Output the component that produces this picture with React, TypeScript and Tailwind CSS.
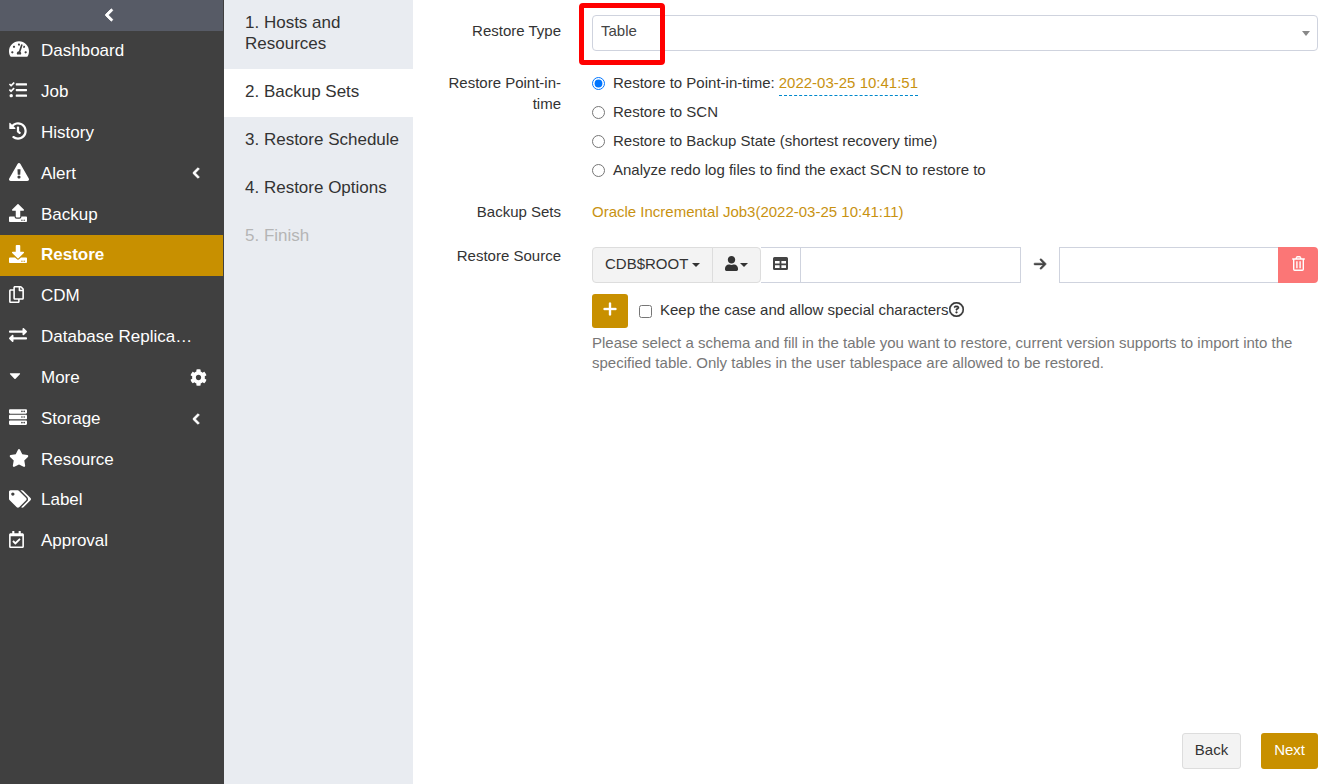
import { useState } from "react";
import type { ReactNode } from "react";
import type { IconType } from "react-icons";
import {
  FaChevronLeft,
  FaCaretDown,
  FaCog,
  FaDownload,
  FaExchangeAlt,
  FaExclamationTriangle,
  FaHistory,
  FaRegCalendarCheck,
  FaRegCopy,
  FaServer,
  FaStar,
  FaTachometerAlt,
  FaTags,
  FaTasks,
  FaUpload,
  FaUser,
} from "react-icons/fa";
import { FaArrowRight, FaPlus, FaRegCircleQuestion } from "react-icons/fa6";

type NavItem = {
  label: string;
  icon: IconType;
  size?: string;
  active?: boolean;
  trailing?: "chevron" | "gear";
};

const NAV: NavItem[] = [
  { label: "Dashboard", icon: FaTachometerAlt, size: "size-5" },
  { label: "Job", icon: FaTasks },
  { label: "History", icon: FaHistory },
  { label: "Alert", icon: FaExclamationTriangle, size: "size-5", trailing: "chevron" },
  { label: "Backup", icon: FaUpload },
  { label: "Restore", icon: FaDownload, active: true },
  { label: "CDM", icon: FaRegCopy, size: "h-[17px] w-[15px]" },
  { label: "Database Replica…", icon: FaExchangeAlt },
  { label: "More", icon: FaCaretDown, trailing: "gear" },
  { label: "Storage", icon: FaServer, trailing: "chevron" },
  { label: "Resource", icon: FaStar, size: "size-5" },
  { label: "Label", icon: FaTags, size: "size-[22px]" },
  { label: "Approval", icon: FaRegCalendarCheck, size: "h-[17px] w-[15px]" },
];

const STEPS = [
  "1. Hosts and Resources",
  "2. Backup Sets",
  "3. Restore Schedule",
  "4. Restore Options",
  "5. Finish",
];

const POINTS = [
  "Restore to Point-in-time:",
  "Restore to SCN",
  "Restore to Backup State (shortest recovery time)",
  "Analyze redo log files to find the exact SCN to restore to",
];

function Sidebar() {
  return (
    <nav className="flex w-56 shrink-0 flex-col bg-[#404040] pr-px text-[17px] text-white">
      <button
        type="button"
        aria-label="Collapse menu"
        className="flex h-[31px] items-center justify-center bg-[#575b66] pr-1.5 pb-0.5"
      >
        <FaChevronLeft className="size-[14px] stroke-current" strokeWidth={36} />
      </button>
      <ul className="grid min-h-[531px] auto-rows-fr">
        {NAV.map(({ label, icon: Icon, size, active, trailing }) => (
          <li key={label}>
            <a
              href="#"
              className={
                active
                  ? "flex h-full items-center bg-[#c89000] pr-4 pb-px pl-[9px] font-bold"
                  : "flex h-full items-center pr-4 pb-px pl-[9px]"
              }
            >
              <span className="flex w-8 shrink-0 pb-[3px]">
                {label === "More" ? (
                  <svg viewBox="0 0 12 18" className="h-[18px] w-3 fill-current">
                    <path d="M1.500 6.300h9c.6 0 .8.6.4 1L6.600 11.700a.8.8 0 0 1-1.200 0L1.100 7.300c-.4-.4-.2-1 .4-1z" />
                  </svg>
                ) : (
                  <Icon className={size ?? "size-[18px]"} />
                )}
              </span>
              <span className="flex-1 whitespace-nowrap">{label}</span>
              {trailing === "chevron" && (
                <FaChevronLeft className="mr-[5px] size-3 shrink-0 stroke-current" strokeWidth={40} />
              )}
              {trailing === "gear" && <FaCog className="size-[17px] shrink-0" />}
            </a>
          </li>
        ))}
      </ul>
    </nav>
  );
}

function Steps() {
  return (
    <ol className="w-[189px] shrink-0 bg-[#e9ecf1] text-[17px] leading-[21px] text-[#333333]">
      {STEPS.map((step, i) => (
        <li
          key={step}
          className={
            i === 1
              ? "bg-white pt-3 pr-2 pb-[15px] pl-[21px]"
              : i === 4
                ? "pt-3 pr-2 pb-[15px] pl-[21px] text-[#b5b5b5]"
                : "pt-3 pr-2 pb-[15px] pl-[21px]"
          }
        >
          {step}
        </li>
      ))}
    </ol>
  );
}

function Row({ label, htmlFor, children }: { label: string; htmlFor?: string; children: ReactNode }) {
  return (
    <div className="flex gap-[31px]">
      <label htmlFor={htmlFor} className="w-[116px] shrink-0 text-right">
        {label}
      </label>
      <div className="min-w-0 flex-1">{children}</div>
    </div>
  );
}

function TableIcon() {
  return (
    <svg viewBox="0 0 15 13" className="h-[13px] w-[15px]">
      <path
        fill="#444444"
        fillRule="evenodd"
        d="M1.500 0h12A1.500 1.500 0 0 1 15 1.500v10a1.500 1.500 0 0 1-1.500 1.500h-12A1.500 1.500 0 0 1 0 11.500v-10A1.500 1.500 0 0 1 1.500 0zM2 4v2.500h4.600V4zM8.400 4v2.500H13V4zM2 8.200V11h4.600V8.200zM8.400 8.200V11H13V8.200z"
      />
    </svg>
  );
}

function TrashIcon() {
  return (
    <svg viewBox="0 0 13 15" className="h-[15px] w-[13px]" fill="none" stroke="currentColor" strokeWidth="1.400">
      <path d="M.2 3h12.600M3.900 2.900l.8-1.700c.1-.3.4-.5.7-.5h2.200c.3 0 .6.2.7.5l.8 1.700M1.700 3.200v10c0 .6.4 1.100 1 1.100h7.600c.6 0 1-.5 1-1.100v-10M4.900 5.200v7M8.100 5.200v7" />
    </svg>
  );
}

function RestoreForm() {
  const [point, setPoint] = useState(0);
  return (
    <form className="flex flex-1 flex-col">
      <Row label="Restore Type" htmlFor="restore-type">
        <div className="relative -mt-[5px]">
          <select
            id="restore-type"
            className="block h-9 w-full appearance-none rounded border border-[#cfd3de] bg-white px-2 pb-1.5 text-[#444444]"
          >
            <option>Table</option>
          </select>
          <svg
            viewBox="0 0 8 5"
            className="pointer-events-none absolute top-4 right-2 h-[5px] w-2 fill-[#888888]"
          >
            <path d="M0 0h8L4 5z" />
          </svg>
          <div className="pointer-events-none absolute -top-3 -left-[13px] h-[62px] w-[86px] rounded border-[5px] border-[#ff0000]" />
        </div>
      </Row>

      <div className="mt-[21px]">
        <Row label="Restore Point-in-time">
          <div className="flex flex-col gap-2">
            {POINTS.map((text, i) => (
              <div key={text} className="flex h-[21px] items-center">
                <input
                  type="radio"
                  name="point"
                  id={`point-${i}`}
                  checked={point === i}
                  onChange={() => setPoint(i)}
                  className="mt-0.5 mr-2 size-[13px]"
                />
                <label htmlFor={`point-${i}`}>{text}</label>
                {i === 0 && (
                  <a href="#" className="mt-[3px] ml-1 border-b border-dashed border-[#0088cc] pb-0.5 text-[#c89211]">
                    2022-03-25 10:41:51
                  </a>
                )}
              </div>
            ))}
          </div>
        </Row>
      </div>

      <div className="mt-[21px]">
        <Row label="Backup Sets">
          <a href="#" className="text-[#c89211]">
            Oracle Incremental Job3(2022-03-25 10:41:11)
          </a>
        </Row>
      </div>

      <div className="mt-[23px]">
        <Row label="Restore Source" htmlFor="source-table">
          <div className="mt-0.5 flex h-9">
            <button
              type="button"
              className="flex shrink-0 items-center gap-1 rounded-l border border-[#dddddd] bg-[#f3f3f3] px-3 pb-1"
            >
              CDB$ROOT
              <svg viewBox="0 0 8 4" className="mt-1 h-1 w-2 fill-current">
                <path d="M0 0h8L4 4z" />
              </svg>
            </button>
            <button
              type="button"
              aria-label="Schema"
              className="-ml-px flex w-[49px] shrink-0 items-center justify-center rounded-r border border-[#dddddd] bg-[#f3f3f3] pb-1"
            >
              <FaUser className="h-[15px] w-[13px]" preserveAspectRatio="none" />
              <svg viewBox="0 0 8 4" className="mt-1 ml-0.5 h-1 w-2 fill-current">
                <path d="M0 0h8L4 4z" />
              </svg>
            </button>
            <span className="flex w-[39px] shrink-0 items-center justify-center border-y border-[#cfd3de] pb-1">
              <TableIcon />
            </span>
            <input
              id="source-table"
              type="text"
              className="min-w-0 flex-1 border border-[#cfd3de] bg-white px-2"
            />
            <span className="flex w-[38px] shrink-0 items-center justify-center pb-[3px] text-[#444444]">
              <FaArrowRight className="size-[14px] stroke-current" strokeWidth={20} />
            </span>
            <input
              type="text"
              aria-label="Target table"
              className="min-w-0 flex-1 border border-r-0 border-[#cfd3de] bg-white px-2"
            />
            <button
              type="button"
              aria-label="Delete"
              className="flex w-10 shrink-0 items-center justify-center rounded-r bg-[#fb7676] pb-1 text-white"
            >
              <TrashIcon />
            </button>
          </div>
          <div className="mt-[11px] flex">
            <button
              type="button"
              aria-label="Add"
              className="flex h-[34px] w-9 items-center justify-center rounded-[3px] bg-[#c89000] pb-1 text-white"
            >
              <FaPlus className="size-4 stroke-current" strokeWidth={12} />
            </button>
            <div className="ml-[11px] flex items-center pb-[3px]">
              <input type="checkbox" id="keep-case" className="mt-1 mr-2 size-[13px]" />
              <label htmlFor="keep-case">Keep the case and allow special characters</label>
              <FaRegCircleQuestion className="size-[15px] stroke-current" strokeWidth={12} />
            </div>
          </div>
          <p className="mt-[5px] leading-5 text-[#777777]">
            Please select a schema and fill in the table you want to restore, current version supports to
            import into the specified table. Only tables in the user tablespace are allowed to be restored.
          </p>
        </Row>
      </div>

      <div className="mt-auto flex justify-end gap-5">
        <button
          type="button"
          className="h-9 rounded-[3px] border border-[#dddddd] bg-[#f3f3f3] px-3 pb-1"
        >
          Back
        </button>
        <button type="button" className="h-9 rounded-[3px] bg-[#c89000] px-[13px] pb-1 text-white">
          Next
        </button>
      </div>
    </form>
  );
}

export default function App() {
  return (
    <div className="flex min-h-screen bg-white font-['Liberation_Sans',Arial,sans-serif]">
      <Sidebar />
      <Steps />
      <main className="flex min-w-0 flex-1 flex-col pt-5 pr-[13px] pb-[15px] pl-8 text-[15px] leading-[21px] text-[#333333]">
        <RestoreForm />
      </main>
    </div>
  );
}
